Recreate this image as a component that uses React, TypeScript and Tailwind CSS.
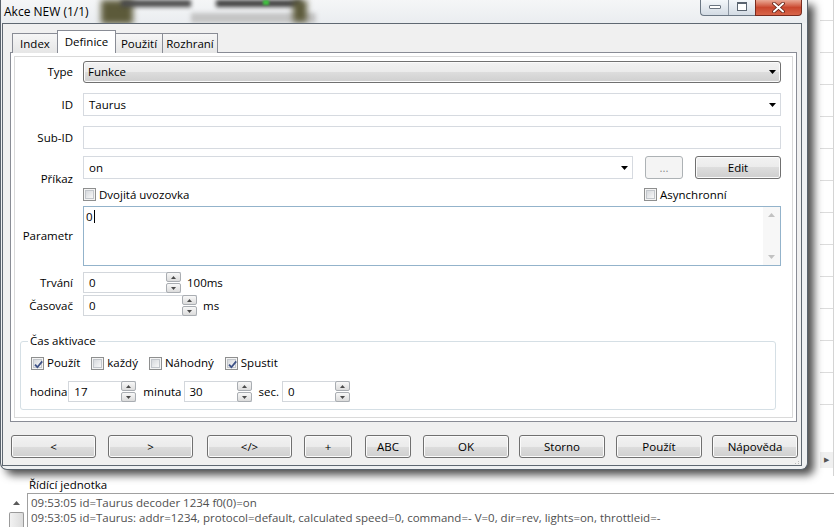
import React from "react";

function Arrow() {
  return (
    <svg width="7" height="4" viewBox="0 0 7 4" className="shrink-0">
      <path d="M0 0H7L3.5 4Z" fill="#000" />
    </svg>
  );
}

function Check({ checked = false }: { checked?: boolean }) {
  return (
    <span className="relative flex w-[13px] h-[13px] shrink-0 border border-[#8e8f8f] bg-[#f4f4f4] p-[1px]">
      <span className="flex-1 border border-[#c2c6cb] bg-gradient-to-br from-[#d6d9dd] to-[#f8f8f8]" />
      {checked && (
        <svg className="absolute left-[1px] top-[1px]" width="11" height="11" viewBox="0 0 11 11">
          <path d="M2 5.6L4.4 8.2L9.2 2.4" fill="none" stroke="#3d5186" strokeWidth="1.8" />
        </svg>
      )}
    </span>
  );
}

function CheckItem({ label, checked = false }: { label: string; checked?: boolean }) {
  return (
    <span className="flex items-center gap-[3px]">
      <Check checked={checked} />
      <span>{label}</span>
    </span>
  );
}

function SpinBtn({ up = false }: { up?: boolean }) {
  return (
    <span className="flex h-[10px] items-center justify-center rounded-[2px] border border-[#a9adb2] bg-gradient-to-b from-[#f8f8f8] to-[#dcdcdc]">
      <svg width="5" height="3" viewBox="0 0 5 3">
        <path d={up ? "M0 3H5L2.5 0Z" : "M0 0H5L2.5 3Z"} fill="#4a4a4a" />
      </svg>
    </span>
  );
}

function Spin({ value, className }: { value: string; className: string }) {
  return (
    <div className={`flex h-[21px] border-y border-l border-[#d3d7dc] bg-white ${className}`}>
      <span className="flex-1 pl-[5px] leading-[19px]">{value}</span>
      <span className="-my-[1px] flex w-[15px] flex-col justify-between">
        <SpinBtn up />
        <SpinBtn />
      </span>
    </div>
  );
}

function WinButton({ label, className = "", disabled = false }: { label: string; className?: string; disabled?: boolean }) {
  return (
    <div
      className={`flex h-[23px] shrink-0 items-center justify-center rounded-[3px] border ${
        disabled
          ? "border-[#adb2b5] bg-[#f4f4f4] text-[#8a8a8a]"
          : "border-[#707070] bg-[linear-gradient(#f2f2f2,#ebebeb_50%,#dddddd_50%,#cfcfcf)] shadow-[inset_0_0_0_1px_#fbfbfb]"
      } ${className}`}
    >
      {label}
    </div>
  );
}

function FormRow({ label, children, className = "" }: { label: string; children: React.ReactNode; className?: string }) {
  return (
    <div className={`flex items-center ${className}`}>
      <span className="w-[58px] shrink-0 text-right">{label}</span>
      <div className="ml-[10px] flex min-w-0 flex-1 items-center">{children}</div>
    </div>
  );
}

const tabs = [
  { name: "Index", cls: "w-[46px] h-[20px] bg-gradient-to-b from-[#f6f6f6] to-[#e6e6e6]" },
  { name: "Definice", cls: "w-[59px] h-[23px] bg-white z-10 -ml-[1px]" },
  { name: "Použití", cls: "w-[48px] h-[20px] bg-gradient-to-b from-[#f6f6f6] to-[#e6e6e6] -ml-[1px]" },
  { name: "Rozhraní", cls: "w-[56px] h-[20px] bg-gradient-to-b from-[#f6f6f6] to-[#e6e6e6] -ml-[1px]" },
];

const buttons = [
  { label: "<", cls: "w-[85px]" },
  { label: ">", cls: "w-[85px] ml-[12px]" },
  { label: "</>", cls: "w-[85px] ml-[14px]" },
  { label: "+", cls: "w-[48px] ml-[12px]" },
  { label: "ABC", cls: "w-[46px] ml-[13px]" },
  { label: "OK", cls: "w-[86px] ml-[12px]" },
  { label: "Storno", cls: "w-[86px] ml-[10px]" },
  { label: "Použít", cls: "w-[86px] ml-[11px]" },
  { label: "Nápověda", cls: "w-[86px] ml-[10px]" },
];

export default function App() {
  return (
    <div className="relative h-[527px] w-[834px] overflow-hidden bg-white font-['Open_Sans',sans-serif] text-[11.5px] leading-[16px] text-black">
      {/* background application */}
      <div className="flex h-[476px] justify-end">
        <div className="flex w-[14px] flex-col border-r border-[#d4d4d4] pt-[20px]">
          {Array.from({ length: 13 }).map((_, i) => (
            <div key={i} className="h-[32px] shrink-0 border-t border-[#dcdcdc]" />
          ))}
          <div className="mt-[16px] flex h-[16px] items-center justify-center bg-[#f0f0f0] text-[7px] text-[#555]">▶</div>
        </div>
      </div>
      <div className="h-[17px] pl-[29px] leading-[17px]">Řídící jednotka</div>
      <div className="flex h-[34px]">
        <div className="ml-[9px] flex w-[15px] flex-col pt-[3px]">
          <div className="flex h-[14px] items-center justify-center">
            <svg width="7" height="4" viewBox="0 0 7 4">
              <path d="M0 4H7L3.5 0Z" fill="#5a5a5a" />
            </svg>
          </div>
          <div className="mt-[2px] flex-1 rounded-t-[2px] border border-b-0 border-[#9a9a9a] bg-gradient-to-r from-[#f2f2f2] to-[#dcdcdc]" />
        </div>
        <div className="ml-[3px] flex-1 border-l border-t border-[#a0a0a0] pl-[3px] pt-[1px] leading-[15px] text-[#4f4f4f]">
          <div>09:53:05 id=Taurus decoder 1234 f0(0)=on</div>
          <div>09:53:05 id=Taurus: addr=1234, protocol=default, calculated speed=0, command=- V=0, dir=rev, lights=on, throttleid=-</div>
        </div>
      </div>

      {/* dialog window */}
      <div className="absolute left-0 top-0 flex h-[470px] w-[808px] flex-col rounded-b-[7px] border-x border-b border-[#59626c] bg-[#eef0f2] shadow-[6px_5px_9px_rgba(0,0,0,0.7)]">
        {/* title bar */}
        <div className="relative flex h-[23px] items-start overflow-hidden bg-gradient-to-b from-[#f5f6f7] to-[#eaedf0]">
          <div className="absolute left-[100px] top-0 h-[24px] w-[32px] bg-[#5c5a3a] blur-[3px]" />
          <div className="absolute left-[120px] top-0 h-[7px] w-[70px] bg-[#4a4a4a] blur-[2px]" />
          <div className="absolute left-[190px] top-[13px] h-[10px] w-[125px] bg-[#c4c4c4] blur-[2px]" />
          <div className="absolute left-[215px] top-0 h-[7px] w-[85px] bg-[#3e3e3e] blur-[2px]" />
          <div className="absolute left-[262px] top-0 h-[5px] w-[6px] bg-[#3fbf3f] blur-[1px]" />
          <div className="absolute left-[292px] top-0 h-[22px] w-[14px] bg-[#5c5a3a] blur-[3px]" />
          <span className="relative self-center pl-[3px] pt-[1px] text-[12px]">Akce NEW (1/1)</span>
          <div className="relative ml-auto mr-[5px] flex h-[16px]">
            <div className="flex rounded-bl-[4px] border-b border-l border-[#6b7784] bg-gradient-to-b from-[#f4f7fa] to-[#d3dbe4]">
              <div className="flex w-[27px] items-start justify-center pt-[5px]">
                <span className="h-[4px] w-[12px] rounded-[1px] border border-[#6a7480] bg-white" />
              </div>
              <div className="flex w-[27px] items-start justify-center border-l border-[#8c96a2] pt-[2px]">
                <span className="h-[9px] w-[10px] border border-t-2 border-[#5a6470] bg-white" />
              </div>
            </div>
            <div className="flex w-[47px] items-start justify-center rounded-br-[4px] border-b border-l border-r border-[#7a2b1e] bg-gradient-to-b from-[#e9a996] via-[#c9472e] to-[#d8654a] pt-[2px]">
              <svg width="13" height="11" viewBox="0 0 13 11">
                <path d="M2 1.5L11 9.5M11 1.5L2 9.5" stroke="#5a1d12" strokeWidth="3.6" strokeLinecap="round" />
                <path d="M2 1.5L11 9.5M11 1.5L2 9.5" stroke="#fff" strokeWidth="2" strokeLinecap="round" />
              </svg>
            </div>
          </div>
        </div>

        {/* client area */}
        <div className="ml-[1px] mr-[5px] flex h-[443px] flex-col border border-[#5f6872] bg-[#f0f0f0] px-[7px] pt-[6px]">
          {/* tabs */}
          <div className="relative z-10 -mb-[1px] flex items-end pl-[2px]">
            {tabs.map((t) => (
              <div
                key={t.name}
                className={`relative flex items-center justify-center border-x border-t border-[#898c95] ${t.cls}`}
              >
                {t.name}
              </div>
            ))}
          </div>

          {/* tab page */}
          <div className="mr-[-3px] flex h-[370px] flex-col border border-[#898c95] bg-white px-[3px] pb-[3px] pt-[3px]">
            <div className="flex flex-1 flex-col border border-[#dadada] pr-[11px] pt-[4px]">
              <FormRow label="Type">
                <div className="flex h-[22px] flex-1 items-center justify-between rounded-[3px] border border-[#707070] bg-[linear-gradient(#f2f2f2,#ebebeb_50%,#dddddd_50%,#cfcfcf)] pl-[4px] pr-[4px] shadow-[inset_0_0_0_1px_#fbfbfb]">
                  <span>Funkce</span>
                  <Arrow />
                </div>
              </FormRow>

              <FormRow label="ID" className="mt-[10px]">
                <div className="flex h-[23px] flex-1 items-center justify-between border border-[#d6dae0] bg-white pl-[5px] pr-[4px]">
                  <span>Taurus</span>
                  <Arrow />
                </div>
              </FormRow>

              <FormRow label="Sub-ID" className="mt-[10px]">
                <div className="h-[23px] flex-1 border border-[#d6dae0] bg-white" />
              </FormRow>

              <FormRow label="Příkaz" className="mt-[7px]">
                <div className="flex flex-1 flex-col">
                  <div className="flex items-center">
                    <div className="flex h-[23px] flex-1 items-center justify-between border border-[#d6dae0] bg-white pl-[5px] pr-[4px]">
                      <span>on</span>
                      <Arrow />
                    </div>
                    <WinButton label="..." disabled className="ml-[12px] w-[38px]" />
                    <WinButton label="Edit" className="ml-[12px] w-[86px]" />
                  </div>
                  <div className="mt-[9px] flex h-[13px] items-center">
                    <div className="flex-1">
                      <CheckItem label="Dvojitá uvozovka" />
                    </div>
                    <div className="w-[137px]">
                      <CheckItem label="Asynchronní" />
                    </div>
                  </div>
                </div>
              </FormRow>

              <FormRow label="Parametr" className="mt-[5px]">
                <div className="flex h-[60px] flex-1 border border-[#93b3cb] bg-white">
                  <div className="flex-1 pl-[2px] pt-[1px]">
                    <span>0</span>
                    <span className="ml-[1px] inline-block h-[13px] w-[1px] translate-y-[2px] bg-black" />
                  </div>
                  <div className="flex w-[17px] flex-col items-center justify-between bg-[#f7f7f7] py-[6px]">
                    <svg width="7" height="4" viewBox="0 0 7 4">
                      <path d="M0 4H7L3.5 0Z" fill="#c2c2c2" />
                    </svg>
                    <svg width="7" height="4" viewBox="0 0 7 4">
                      <path d="M0 0H7L3.5 4Z" fill="#c2c2c2" />
                    </svg>
                  </div>
                </div>
              </FormRow>

              <FormRow label="Trvání" className="mt-[6px]">
                <Spin value="0" className="w-[98px]" />
                <span className="ml-[6px]">100ms</span>
              </FormRow>

              <FormRow label="Časovač" className="mt-[2px]">
                <Spin value="0" className="w-[114px]" />
                <span className="ml-[6px]">ms</span>
              </FormRow>

              <fieldset className="mx-[5px] mt-[17px] rounded-[3px] border border-[#d5dfe5] pb-[7px]">
                <legend className="ml-[7px] px-[2px] leading-[16px]">Čas aktivace</legend>
                <div className="mt-[6px] flex h-[16px] items-center gap-[11px] pl-[10px]">
                  <CheckItem label="Použít" checked />
                  <CheckItem label="každý" />
                  <CheckItem label="Náhodný" />
                  <CheckItem label="Spustit" checked />
                </div>
                <div className="mt-[10px] flex items-center pl-[9px]">
                  <span>hodina</span>
                  <Spin value="17" className="ml-[1px] w-[68px]" />
                  <span className="ml-[7px]">minuta</span>
                  <Spin value="30" className="ml-[2px] w-[68px]" />
                  <span className="ml-[7px]">sec.</span>
                  <Spin value="0" className="ml-[3px] w-[68px]" />
                </div>
              </fieldset>
            </div>
          </div>

          {/* bottom buttons */}
          <div className="mt-[13px] flex pl-[1px]">
            {buttons.map((b) => (
              <WinButton key={b.label} label={b.label} className={b.cls} />
            ))}
          </div>
          <div className="ml-auto mt-[3px] mr-[-5px] flex flex-col items-end gap-[1px] opacity-60">
            <span className="h-[1px] w-[1px] bg-[#999]" />
            <span className="h-[1px] w-[4px] bg-[repeating-linear-gradient(90deg,#999_0_1px,transparent_1px_3px)]" />
          </div>
        </div>
      </div>
    </div>
  );
}
